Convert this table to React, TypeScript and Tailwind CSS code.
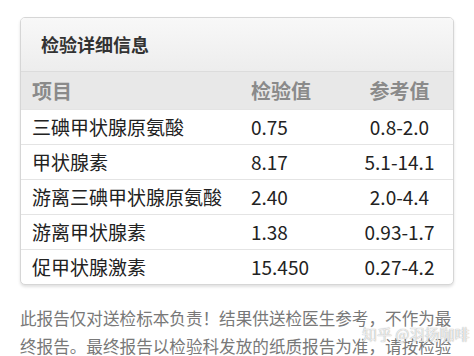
const rows = [
  { name: "三碘甲状腺原氨酸", value: "0.75", range: "0.8-2.0" },
  { name: "甲状腺素", value: "8.17", range: "5.1-14.1" },
  { name: "游离三碘甲状腺原氨酸", value: "2.40", range: "2.0-4.4" },
  { name: "游离甲状腺素", value: "1.38", range: "0.93-1.7" },
  { name: "促甲状腺激素", value: "15.450", range: "0.27-4.2" },
];

export default function App() {
  return (
    <div
      className="relative w-[474px] h-[356px] overflow-hidden bg-white pt-[17px] px-[20px]"
      style={{ fontFamily: '"Noto Sans CJK SC", "Noto Sans", sans-serif' }}
    >
      {/* card */}
      <div className="rounded-[5px] border border-[#d6d6d6] shadow-[0_2px_3px_rgba(0,0,0,0.12)] overflow-hidden bg-white">
        <div className="h-[53px] flex items-center pl-[20px] bg-gradient-to-b from-[#f8f8f8] to-[#ededed]">
          <span className="text-[18px] font-bold text-[#333]">检验详细信息</span>
        </div>
        <div className="h-[38px] grid grid-cols-[230px_100px_1fr] items-center bg-[#e8e8e8] border-t border-[#dcdcdc] text-[20px] font-bold text-[#8a8a8a]">
          <span className="pl-[11px]">项目</span>
          <span>检验值</span>
          <span className="text-center pr-[5px]">参考值</span>
        </div>
        {rows.map((r) => (
          <div
            key={r.name}
            className="h-[35px] grid grid-cols-[230px_100px_1fr] items-center border-t border-[#e4e4e4] text-[19px] text-[#222]"
          >
            <span className="pl-[11px] whitespace-nowrap">{r.name}</span>
            <span>{r.value}</span>
            <span className="text-center pr-[5px]">{r.range}</span>
          </div>
        ))}
      </div>

      {/* footer note */}
      <p className="mt-[19px] w-[436px] text-[16.6px] leading-[28px] text-[#787878]">
        此报告仅对送检标本负责！结果供送检医生参考，不作为最终报告。最终报告以检验科发放的纸质报告为准，请按检验科规定时间领取纸质报告。
      </p>

      {/* watermark */}
      <span className="absolute left-[362px] top-[323px] text-[15px] text-white/80 [text-shadow:0_0_1px_#888]">
        知乎 @羽扬咖啡
      </span>
    </div>
  );
}
